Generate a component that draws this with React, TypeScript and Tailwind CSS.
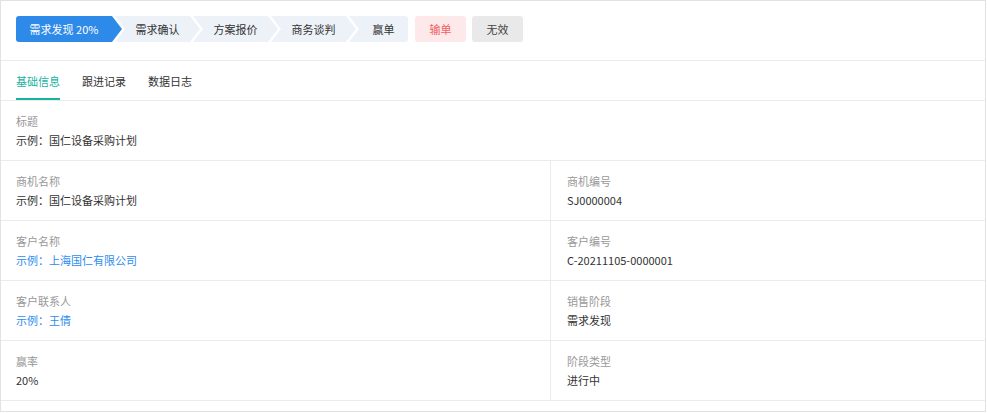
import React from 'react';

// Stage progress + basic info panel for an opportunity record
const steps = [
  { label: '需求发现 20%', w: 'w-[106px]', kind: 'first', active: true },
  { label: '需求确认', w: 'w-[85px]', kind: 'mid', active: false },
  { label: '方案报价', w: 'w-[85px]', kind: 'mid', active: false },
  { label: '商务谈判', w: 'w-[85px]', kind: 'mid', active: false },
  { label: '赢单', w: 'w-[59px]', kind: 'last', active: false },
];

const shapeClass: Record<string, string> = {
  first: 'rounded-l-[3px] pr-[10px] [clip-path:polygon(0_0,calc(100%_-_10px)_0,100%_50%,calc(100%_-_10px)_100%,0_100%)]',
  mid: '-ml-[7px] px-[10px] [clip-path:polygon(0_0,calc(100%_-_10px)_0,100%_50%,calc(100%_-_10px)_100%,0_100%,10px_50%)]',
  last: '-ml-[7px] pl-[10px] rounded-r-[3px] [clip-path:polygon(0_0,100%_0,100%_100%,0_100%,10px_50%)]',
};

const tabs = ['基础信息', '跟进记录', '数据日志'];

interface Field {
  label: string;
  value: string;
  link?: boolean;
}

const rows: Field[][] = [
  [{ label: '商机名称', value: '示例：国仁设备采购计划' }, { label: '商机编号', value: 'SJ0000004' }],
  [{ label: '客户名称', value: '示例：上海国仁有限公司', link: true }, { label: '客户编号', value: 'C-20211105-0000001' }],
  [{ label: '客户联系人', value: '示例：王倩', link: true }, { label: '销售阶段', value: '需求发现' }],
  [{ label: '赢率', value: '20%' }, { label: '阶段类型', value: '进行中' }],
];

const Cell: React.FC<{ field: Field }> = ({ field }) => (
  <div className="pt-[11px] leading-[19px]">
    <div className="text-[#999]">{field.label}</div>
    <div className={field.link ? 'text-[#2d8cf0]' : 'text-[#333]'}>{field.value}</div>
  </div>
);

export default function App() {
  return (
    <div className="w-[986px] h-[412px] border border-[#e2e2e2] bg-white text-[11px] font-['Noto_Sans_CJK_SC',sans-serif]">
      {/* Stage steps */}
      <div className="h-[60px] border-b border-[#ebebeb] pt-[15px] pl-[15px] flex items-start">
        {steps.map((s) => (
          <div
            key={s.label}
            className={`${s.w} ${shapeClass[s.kind]} h-[26px] flex items-center justify-center ${
              s.active ? 'bg-[#2e8ae9] text-white' : 'bg-[#edf2f9] text-[#333]'
            }`}
          >
            {s.label}
          </div>
        ))}
        <div className="ml-[7px] w-[51px] h-[26px] rounded-[3px] bg-[#fde9ea] text-[#f25e5e] flex items-center justify-center">
          输单
        </div>
        <div className="ml-[6px] w-[51px] h-[26px] rounded-[3px] bg-[#e9e9e9] text-[#444] flex items-center justify-center">
          无效
        </div>
      </div>

      {/* Tabs */}
      <div className="h-[40px] border-b border-[#ebebeb] pl-[15px] flex gap-[22px]">
        {tabs.map((t, i) => (
          <div
            key={t}
            className={`h-full flex items-center pt-[4px] border-b-2 ${
              i === 0 ? 'border-[#17b3a0] text-[#17b3a0]' : 'border-transparent text-[#333]'
            }`}
          >
            {t}
          </div>
        ))}
      </div>

      {/* Fields */}
      <div className="h-[60px] border-b border-[#ebebeb] pl-[15px]">
        <Cell field={{ label: '标题', value: '示例：国仁设备采购计划' }} />
      </div>
      {rows.map((r, i) => (
        <div key={i} className="h-[60px] border-b border-[#ebebeb] flex">
          <div className="w-[550px] border-r border-[#ebebeb] pl-[15px]">
            <Cell field={r[0]} />
          </div>
          <div className="flex-1 pl-[16px]">
            <Cell field={r[1]} />
          </div>
        </div>
      ))}
    </div>
  );
}
